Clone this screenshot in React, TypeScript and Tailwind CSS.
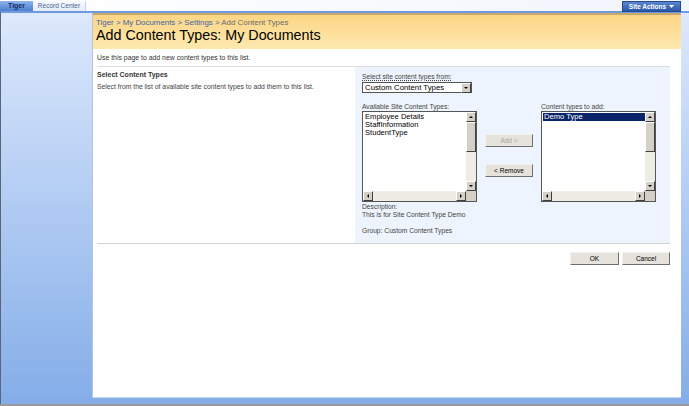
import React from "react";

function Arrow({ dir }: { dir: "up" | "down" | "left" | "right" }) {
  const pts =
    dir === "up"
      ? "2,5 4,3 6,5"
      : dir === "down"
      ? "2,3 4,5 6,3"
      : dir === "left"
      ? "5,2 3,4 5,6"
      : "3,2 5,4 3,6";
  return (
    <svg width="8" height="8" viewBox="0 0 8 8">
      <polygon points={pts} fill="#000" />
    </svg>
  );
}

function SbButton({ dir }: { dir: "up" | "down" | "left" | "right" }) {
  return (
    <div className="w-[10px] h-[10px] shrink-0 flex items-center justify-center bg-[#d4d0c8] border border-t-white border-l-white border-b-[#404040] border-r-[#404040]">
      <Arrow dir={dir} />
    </div>
  );
}

function ListBox({ items, selected }: { items: string[]; selected?: string }) {
  return (
    <div className="w-[115px] h-[91px] flex flex-col border border-[#555] bg-white">
      <div className="flex flex-1 min-h-0">
        <div className="flex-1 pl-[1px] pt-[1px] text-[7.6px] leading-[8px] text-black">
          {items.map((it) =>
            it === selected ? (
              <div key={it} className="bg-[#0a246a] text-white pl-[1px]">
                {it}
              </div>
            ) : (
              <div key={it} className="pl-[1px]">
                {it}
              </div>
            )
          )}
        </div>
        <div className="w-[10px] flex flex-col bg-[#eeede5]">
          <SbButton dir="up" />
          <div className="h-[30px] bg-[#d4d0c8] border border-t-white border-l-white border-b-[#404040] border-r-[#404040]" />
          <div className="flex-1" />
          <SbButton dir="down" />
        </div>
      </div>
      <div className="flex h-[10px]">
        <div className="flex flex-1 bg-[#eeede5]">
          <SbButton dir="left" />
          <div className="flex-1" />
          <SbButton dir="right" />
        </div>
        <div className="w-[10px] bg-[#d4d0c8]" />
      </div>
    </div>
  );
}

function Btn({ label, disabled, w = "w-[48px]" }: { label: string; disabled?: boolean; w?: string }) {
  return (
    <div
      className={`${w} h-[13px] flex items-center justify-center text-[6.5px] bg-[#e6e3dc] border border-t-[#f4f3ef] border-l-[#f4f3ef] border-b-[#6f6f6f] border-r-[#6f6f6f] ${
        disabled ? "text-[#a8a6a0]" : "text-black"
      }`}
    >
      {label}
    </div>
  );
}

export default function App() {
  return (
    <div
      className="w-[689px] h-[406px] flex flex-col overflow-hidden bg-white"
      style={{ fontFamily: '"Liberation Sans", Arial, sans-serif' }}
    >
      {/* top bar */}
      <div className="h-[11px] flex items-end bg-gradient-to-r from-white to-[#f1f5fc] relative">
        <div className="h-[10px] w-[33px] flex items-center justify-center text-[7px] font-bold text-[#0f2a66] bg-gradient-to-b from-[#8fb4ec] to-[#4d7fcf]">
          Tiger
        </div>
        <div className="h-[10px] w-[53px] flex items-center justify-center text-[6.5px] text-[#4a6390] bg-gradient-to-b from-[#f7faff] to-[#e3ecfa] border-r border-[#c3d3ec]">
          Record Center
        </div>
        <div className="absolute right-[8px] top-[1px] h-[11px] w-[59px] flex items-center justify-center gap-[3px] text-[6.5px] font-bold text-white bg-gradient-to-b from-[#5b86cf] to-[#2c58a6] border border-[#24498c]">
          Site Actions
          <svg width="5" height="3" viewBox="0 0 5 3">
            <polygon points="0,0 5,0 2.5,3" fill="#fff" />
          </svg>
        </div>
      </div>

      {/* body */}
      <div className="flex-1 flex flex-col border-t-2 border-[#6e9be0] bg-gradient-to-b from-[#dde9fc] to-[#84ade8] pl-[91px] pr-[8px] pb-[6px] border-l border-l-[#5a6577]">
        <div className="flex-1 flex flex-col bg-white border-l border-[#b9c4d3] border-b border-b-[#c7d7f0]">
          {/* header */}
          <div className="h-[36px] border-t-2 border-[#c9a86b] bg-gradient-to-b from-[#fcd585] to-[#fde9ae] pl-[3px] pt-[3px]">
            <div className="text-[7.9px] leading-[9px] text-[#4065a6]">
              Tiger &gt; My Documents &gt; Settings &gt; <span className="text-[#6c6c6c]">Add Content Types</span>
            </div>
            <div className="text-[14.3px] leading-[16px] text-black">Add Content Types: My Documents</div>
          </div>

          {/* content */}
          <div className="pl-[4px] pr-[11px]">
            <div className="pt-[5px] h-[17px] text-[6.9px] leading-[8px] text-[#333]">
              Use this page to add new content types to this list.
            </div>
            <div className="flex border-t border-[#dcdcdc] border-b border-b-[#d3d3d3]">
              <div className="w-[258px] pt-[4px]">
                <div className="text-[7px] leading-[8px] font-bold text-[#333]">Select Content Types</div>
                <div className="mt-[4px] text-[6.8px] leading-[8px] text-[#444]">
                  Select from the list of available site content types to add them to this list.
                </div>
              </div>
              <div className="flex-1 h-[176px] bg-[#eef4fd] pl-[7px] pt-[6px]">
                <div className="text-[6.7px] leading-[8px] text-[#444] underline decoration-dotted">
                  Select site content types from:
                </div>
                <div className="w-[110px] h-[11px] mt-[1px] flex border border-[#555] bg-white">
                  <div className="flex-1 pl-[2px] text-[7.8px] leading-[9px] text-black">Custom Content Types</div>
                  <SbButton dir="down" />
                </div>
                <div className="flex mt-[9px]">
                  <div>
                    <div className="text-[6.7px] leading-[9px] text-[#444]">Available Site Content Types:</div>
                    <ListBox items={["Employee Details", "StaffInformation", "StudentType"]} />
                  </div>
                  <div className="flex flex-col gap-[17px] pt-[32px] px-[8px]">
                    <Btn label="Add >" disabled />
                    <Btn label="< Remove" />
                  </div>
                  <div>
                    <div className="text-[6.7px] leading-[9px] text-[#444]">Content types to add:</div>
                    <ListBox items={["Demo Type"]} selected="Demo Type" />
                  </div>
                </div>
                <div className="mt-[1px] text-[6.7px] leading-[8px] text-[#444]">
                  <div>Description:</div>
                  <div>This is for Site Content Type Demo</div>
                  <div className="mt-[8px]">Group: Custom Content Types</div>
                </div>
              </div>
            </div>
            <div className="flex justify-end gap-[3px] pt-[8px]">
              <Btn label="OK" w="w-[49px]" />
              <Btn label="Cancel" w="w-[48px]" />
            </div>
          </div>
        </div>
      </div>
      <div className="h-[2px] bg-[#9a9a9a]" />
    </div>
  );
}
